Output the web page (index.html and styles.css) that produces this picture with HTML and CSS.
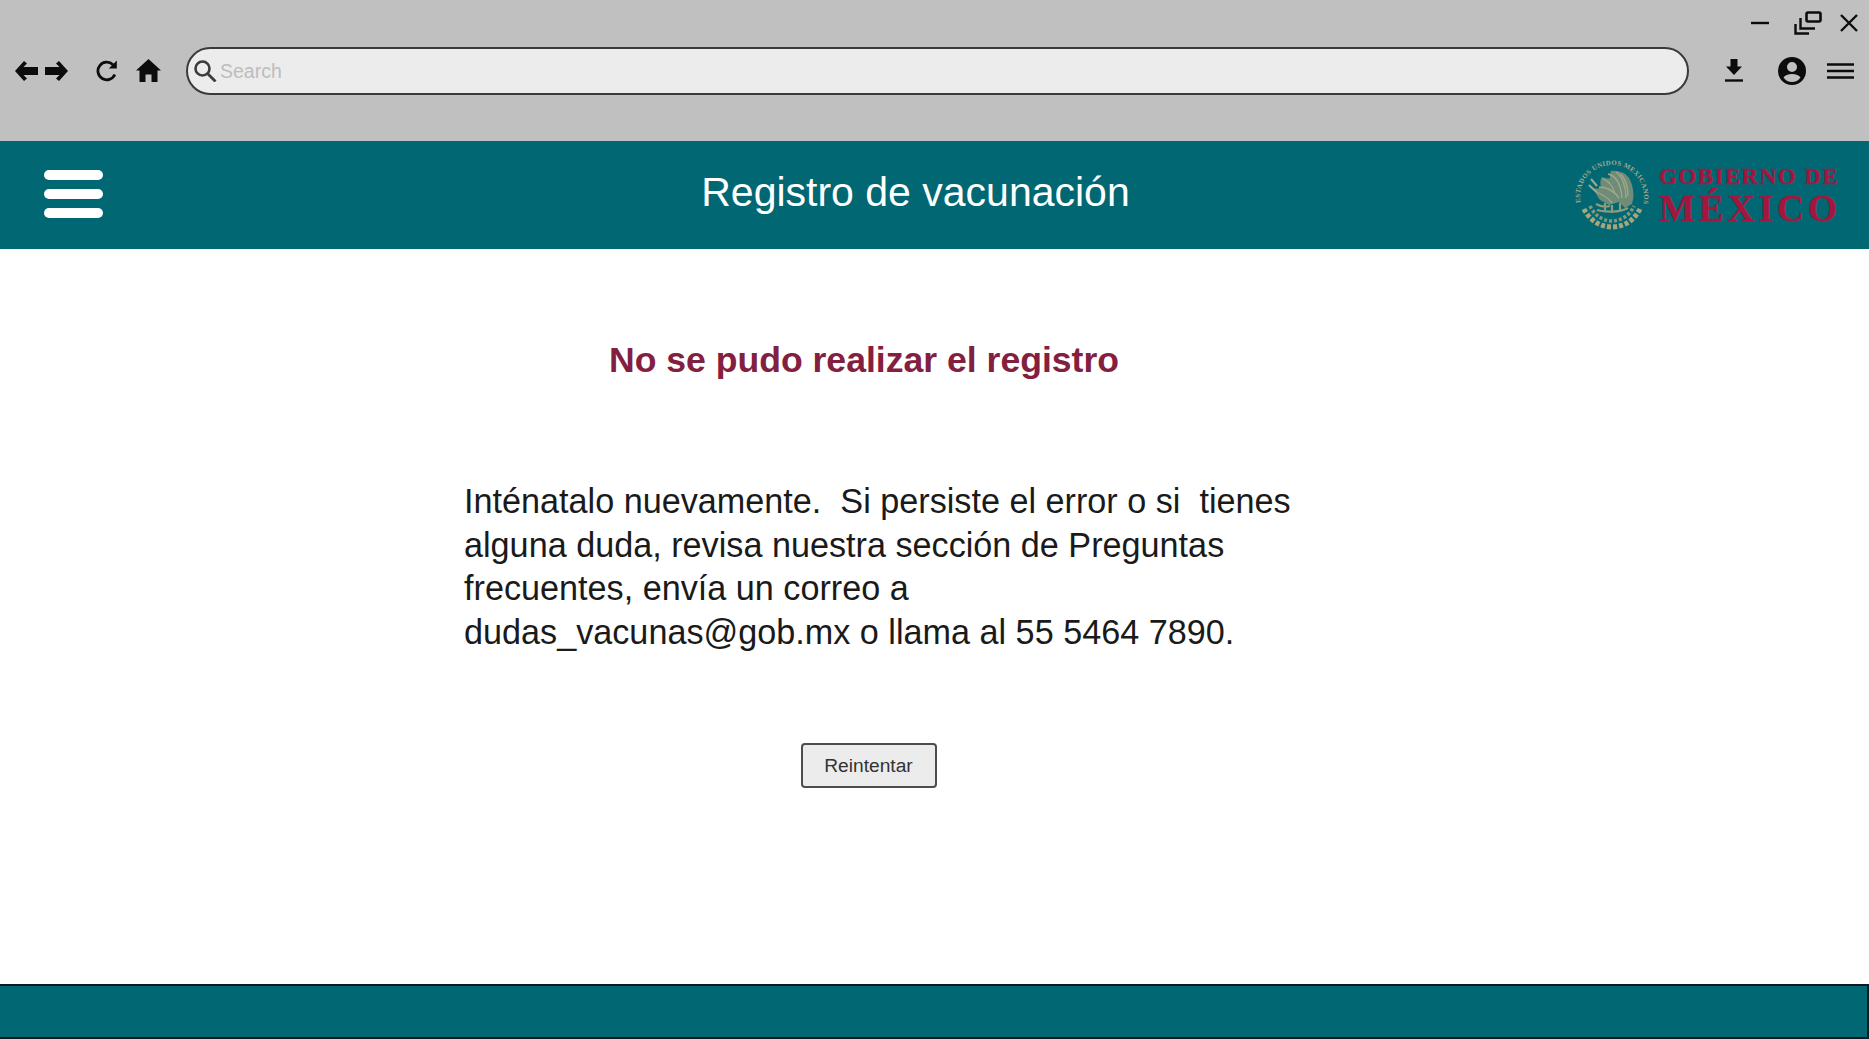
FILE: index.html
```html
<!DOCTYPE html>
<html lang="es">
<head>
<meta charset="utf-8">
<title>Registro de vacunación</title>
<link rel="stylesheet" href="styles.css">
</head>
<body>
<div class="browser">
  <div class="win-controls">
    <svg class="win-min" viewBox="0 0 18 4"><path d="M0 2h18" stroke-width="2.400"/></svg>
    <svg class="win-restore" viewBox="0 0 28 24"><rect x="12.500" y="1.500" width="14" height="9" rx="1.500" stroke-width="2.600"/><path d="M6.500 7v10.500H21M1.500 13v9.500H15" stroke-width="2.400"/></svg>
    <svg class="win-close" viewBox="0 0 18 18"><path d="M1 1l16 16M17 1L1 17" stroke-width="2.400"/></svg>
  </div>
  <div class="toolbar">
    <svg class="nav-arrow" viewBox="0 0 23 20"><path class="fill" d="M0 10L9 0l3 2.500L8.500 6H23v8H8.500l3.500 3.500L9 20z"/></svg>
    <svg class="nav-arrow nav-next" viewBox="0 0 23 20"><path class="fill" d="M23 10L14 0l-3 2.500L14.500 6H0v8h14.500L11 17.500l3 2.500z"/></svg>
    <svg class="nav-reload" viewBox="0 0 22 22"><path d="M18.800 14.500A8.800 8.800 0 1 1 17 4.800" stroke-width="2.800"/><path class="fill" d="M20.800 0.500v8h-8z"/></svg>
    <svg class="nav-home" viewBox="0 0 25 23"><path class="fill" d="M12.500 0L25 11.500h-3.500V23H15.500v-7.500h-6V23H3.500V11.500H0z"/></svg>
    <div class="search">
      <svg class="search-ico" viewBox="0 0 23 22"><circle cx="8.500" cy="8.500" r="7" stroke-width="2.600"/><path d="M13.500 13.500l8 8" stroke-width="2.800"/></svg>
      <span class="search-text">Search</span>
    </div>
    <svg class="tool-dl" viewBox="0 0 18 23"><path class="fill" d="M5.500 0h7v7.500H17l-8 8.500-8-8.500h4.500z"/><path d="M0 21.500h18" stroke-width="2.400"/></svg>
    <svg class="tool-user" viewBox="0 0 28 28"><path class="fill" fill-rule="evenodd" d="M14 0a14 14 0 1 1 0 28a14 14 0 0 1 0-28zM14 5a5 5 0 1 0 0 10a5 5 0 0 0 0-10zM14 17c-4 0-7 1.500-8.500 3.500C7.500 23.500 10.500 25 14 25s6.500-1.500 8.500-4.500C21 18.500 18 17 14 17z"/></svg>
    <svg class="tool-menu" viewBox="0 0 27 16"><path d="M0 1.500h27M0 8h27M0 14.500h27" stroke-width="2.600"/></svg>
  </div>
</div>
<header class="site-header">
  <div class="burger"><span></span><span></span><span></span></div>
  <h1 class="site-title">Registro de vacunación</h1>
  <div class="logo">
    <svg class="emblem" viewBox="0 0 76 76">
      <defs><path id="arc" d="M8.900 53.300A32 32 0 1 1 67.100 53.300"/></defs>
      <text class="emblem-ring"><textPath href="#arc" startOffset="8">ESTADOS UNIDOS MEXICANOS</textPath></text>
      <path class="emblem-eagle" d="M37 14c7-1 15 2 18 7 4 7 6 17 3 26l-7 4-6-6-10 3-9-5c-3-4-5-8-7-12 3 1 6 1 8-1-1-4-1-7 1-10 3 1 6 2 8 1 0-3 0-5 1-7z"/>
      <path class="emblem-cut" d="M34 17c8 2 13 10 14 24M25 30c8 0 15 4 20 11M42 15c6 4 10 14 10 26M22 35c6 2 12 6 16 11M29 22c6 2 10 8 12 15M47 17c4 5 7 13 7 22"/>
      <path class="emblem-hatch" d="M17 22l6 7M15 28c3 3 5 5 8 7"/>
      <path class="emblem-cactus" d="M23 53c7 2 22 3 31-2M31 46v8M38 48v8M46 46v8M22 47c5 3 10 3 14 2"/>
      <path class="emblem-wreath" d="M10 52c5 10 15 18 28 18s23-8 28-18"/>
      <path class="emblem-wreath-in" d="M16 49c4 9 13 15 22 15s18-6 22-15"/>
    </svg>
    <div class="logo-text">
      <span class="logo-top">GOBIERNO DE</span>
      <span class="logo-bottom">MÉXICO</span>
    </div>
  </div>
</header>
<main class="content">
  <h2 class="error-title">No se pudo realizar el registro</h2>
  <p class="error-body">Inténatalo nuevamente.&nbsp; Si persiste el error o si&nbsp; tienes<br>alguna duda, revisa nuestra sección de Preguntas<br>frecuentes, envía un correo a<br>dudas_vacunas@gob.mx o llama al 55 5464 7890.</p>
  <div class="actions"><button class="retry" type="button">Reintentar</button></div>
</main>
<footer class="site-footer"></footer>
</body>
</html>
```
FILE: styles.css
```css
* { box-sizing: border-box; }
html, body { margin: 0; height: 100%; }
body {
  display: flex;
  flex-direction: column;
  height: 1039px;
  overflow: hidden;
  background: #fff;
  font-family: "Liberation Sans", Arial, sans-serif;
}
svg { display: block; flex: none; fill: none; stroke: #0c0c0c; }
svg .fill { fill: #0c0c0c; stroke: none; }

.browser { height: 141px; background: #c0c0c0; padding: 10px 11px 0 15px; flex: none; }
.win-controls { display: flex; justify-content: flex-end; align-items: center; height: 26px; }
.win-min { width: 18px; height: 4px; }
.win-restore { width: 28px; height: 24px; margin-left: 25px; }
.win-close { width: 18px; height: 18px; margin-left: 18px; }

.toolbar { display: flex; align-items: center; margin-top: 11px; }
.nav-arrow { width: 23px; height: 20px; margin-bottom: 1px; }
.nav-next { margin-left: 7px; }
.nav-reload { width: 22px; height: 22px; margin-left: 28px; margin-bottom: 1px; }
.nav-home { width: 25px; height: 23px; margin-left: 18px; margin-bottom: 1px; }

.search {
  display: flex;
  align-items: center;
  flex: none;
  width: 1503px;
  height: 48px;
  margin-left: 25px;
  padding-left: 6px;
  background: #ececec;
  border: 2px solid #3a3a3a;
  border-radius: 24px;
}
.search-ico { width: 23px; height: 22px; stroke: #3c3c3c; }
.search-text { margin-left: 3px; font-size: 19.500px; color: #bdbdbd; }

.tool-dl { width: 18px; height: 23px; margin-left: 36px; margin-bottom: 2px; }
.tool-user { width: 28px; height: 28px; margin-left: 35px; margin-bottom: 1px; }
.tool-menu { width: 27px; height: 16px; margin-left: 21px; margin-bottom: 1px; }

.site-header {
  position: relative;
  display: flex;
  align-items: center;
  justify-content: center;
  flex: none;
  height: 108px;
  background: #016873;
}
.burger { position: absolute; left: 44px; top: 29px; display: flex; flex-direction: column; gap: 9px; }
.burger span { display: block; width: 59px; height: 10px; border-radius: 5px; background: #fff; }
.site-title { margin: 0 38px 6px 0; font-size: 41px; font-weight: 400; color: #fff; }

.logo { position: absolute; right: 28px; top: 16px; display: flex; align-items: center; gap: 9px; }
.emblem { width: 76px; height: 76px; stroke: none; }
.emblem-ring { font: 700 6.800px "Liberation Serif", serif; letter-spacing: 0.400px; fill: #aaa98b; stroke: none; }
.emblem-eagle { fill: #6f8c78; stroke: none; }
.emblem-cut { fill: none; stroke: #a3a887; stroke-width: 1.300px; }
.emblem-hatch { fill: none; stroke: #a3a887; stroke-width: 2px; }
.emblem-cactus { fill: none; stroke: #8f9a78; stroke-width: 2.200px; }
.emblem-wreath { fill: none; stroke: #a8a57c; stroke-width: 5px; stroke-dasharray: 4 2; }
.emblem-wreath-in { fill: none; stroke: #86977a; stroke-width: 3.500px; stroke-dasharray: 3 2; }
.logo-text { display: flex; flex-direction: column; align-items: flex-start; margin-top: 1px; font-family: "Liberation Serif", serif; font-weight: 700; color: #a3173f; -webkit-text-stroke: 0.400px #a3173f; }
.logo-top { font-size: 23px; line-height: 25px; letter-spacing: 1.450px; }
.logo-bottom { font-size: 38px; line-height: 38px; letter-spacing: 3.600px; }

.content { flex: 1; padding: 89px 0 0 464px; }
.error-title { width: 800px; margin: 0; font-size: 35.600px; line-height: 44px; font-weight: 700; color: #84203f; text-align: center; }
.error-body { margin: 98px 0 0; font-size: 34.200px; line-height: 43.600px; color: #1a1a1a; white-space: nowrap; }
.actions { width: 809px; margin-top: 89px; display: flex; justify-content: center; }
.retry {
  width: 136px;
  height: 45px;
  padding: 0;
  font: 19.200px "Liberation Sans", Arial, sans-serif;
  color: #333;
  background: #ececec;
  border: 2px solid #4d4d4d;
  border-radius: 4px;
}
.site-footer { flex: none; height: 55px; background: #016873; border: 2px solid #0a1a1f; border-left: 0; }
```
